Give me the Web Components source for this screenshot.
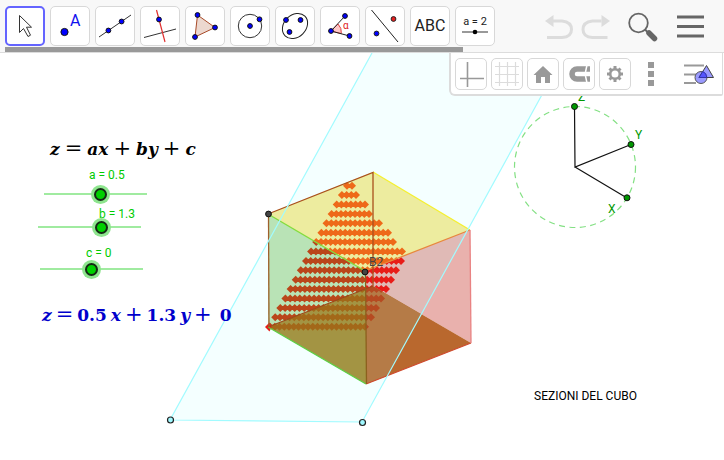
<!DOCTYPE html>
<html lang="it">
<head>
<meta charset="utf-8">
<title>Sezioni del cubo</title>
<style>
  html, body { margin: 0; min-height: 100%; background: #fff; }
  body { font-family: Roboto, "Liberation Sans", sans-serif; font-size: 12px; color: #000; }
</style>
</head>
<body>
<geo-app></geo-app>

<template id="geo-app">
  <style>
    :host { display: flex; flex-direction: column; min-height: 100vh; overflow: hidden; }
    tool-header { flex: none; }
    graph-view { flex: 1; }
  </style>
  <tool-header></tool-header>
  <graph-view></graph-view>
</template>

<template id="tool-button">
  <style>
    :host { display: block; flex: none; width: 40px; height: 40px; }
    button { box-sizing: border-box; display: grid; place-items: center; width: 100%; height: 100%; padding: 0; margin: 0;
      background: #fff; border: 1px solid #d8d8d8; border-radius: 5px; color: #222; font: 16px/20px Roboto, sans-serif; cursor: pointer; }
    :host([selected]) button { border: 2px solid #6464ff; }
    :host([small]) { width: 32px; height: 32px; }
    :host([plain]) button { background: none; border: 0; }
  </style>
  <button type="button"><slot></slot></button>
</template>

<template id="tool-header">
  <style>
    :host { display: grid; grid-template-columns: minmax(0, 1fr) auto; height: 52px; background: #f8f8f8; border-bottom: 1px solid #dcdcdc; }
    .tools { padding: 6px 0 0 5px; }
    nav { display: flex; gap: 5px; }
    .bar { width: 458px; height: 5px; margin-top: 1px; background: #999; }
    .actions { display: flex; align-items: flex-start; padding: 7px 14px 0 0; }
    .actions tool-button { height: 40px; width: 40px; }
    .actions .step { width: 36px; }
    .actions .find { width: 48px; margin: 0 3px 0 6px; }
    svg { display: block; }
    .slide { display: grid; justify-items: center; font-size: 11px; line-height: 12px; }
  </style>
  <div class="tools">
    <nav aria-label="Strumenti">
      <tool-button selected label="Muovi"><svg width="36" height="36" viewBox="7 8 36 36"><path d="M19.500 15.500v17l4-4 4.500 8 2.500-1.300-4-8h5z" fill="#fff" stroke="#333"/></svg></tool-button>
      <tool-button label="Punto"><svg width="38" height="38" viewBox="51 7 38 38"><circle cx="64.500" cy="32" r="3.600" fill="#00f" stroke="#111"/><text x="70" y="26" font-family="Roboto" font-size="16" fill="#11e">A</text></svg></tool-button>
      <tool-button label="Retta"><svg width="38" height="38" viewBox="96 7 38 38"><path d="M99 37 131 15" stroke="#333"/><g fill="#00f" stroke="#111"><circle cx="108.400" cy="30.500" r="2.400"/><circle cx="121.600" cy="21.500" r="2.400"/></g></svg></tool-button>
      <tool-button label="Retta perpendicolare"><svg width="38" height="38" viewBox="141 7 38 38"><path d="M144 37.500 176 29" stroke="#333"/><path d="m156.500 10 8.500 32" stroke="#e03030" stroke-width="1.200"/><circle cx="159" cy="19.500" r="2.400" fill="#00f" stroke="#111"/></svg></tool-button>
      <tool-button label="Poligono"><svg width="38" height="38" viewBox="186 7 38 38"><path d="m197.500 15 17.500 12.500-20 9.500z" fill="#ecd8cf" stroke="#a84a28"/><g fill="#00f" stroke="#111"><circle cx="197.500" cy="15" r="2.400"/><circle cx="215" cy="27.500" r="2.400"/><circle cx="195" cy="37" r="2.400"/></g></svg></tool-button>
      <tool-button label="Circonferenza"><svg width="38" height="38" viewBox="231 7 38 38"><circle cx="250" cy="26" r="11.700" fill="none" stroke="#333"/><g fill="#00f" stroke="#111"><circle cx="250" cy="26" r="2.400"/><circle cx="259.500" cy="19.300" r="2.400"/></g></svg></tool-button>
      <tool-button label="Ellisse"><svg width="38" height="38" viewBox="276 7 38 38"><ellipse cx="295" cy="26" rx="14" ry="11" transform="rotate(-45 295 26)" fill="none" stroke="#222"/><g fill="#00f" stroke="#111"><circle cx="286" cy="20" r="2.400"/><circle cx="300.500" cy="20" r="2.400"/><circle cx="289.500" cy="32" r="2.400"/></g></svg></tool-button>
      <tool-button label="Angolo"><svg width="38" height="38" viewBox="321 7 38 38"><path d="m331 31 7-7q4 4 3.300 9.600z" fill="#ffc8c8" stroke="#e04040"/><path d="m345 16-14 15 18.500 5" fill="none" stroke="#222"/><text x="343" y="29" font-family="Roboto" font-size="10" fill="#e02020">α</text><g fill="#00f" stroke="#111"><circle cx="345" cy="16" r="2.400"/><circle cx="331" cy="31" r="2.400"/><circle cx="349.500" cy="36" r="2.400"/></g></svg></tool-button>
      <tool-button label="Simmetria assiale"><svg width="38" height="38" viewBox="366 7 38 38"><path d="m371.500 10 26.500 32" stroke="#222"/><g stroke="#222"><circle cx="393.500" cy="19" r="2.400" fill="#e82020"/><circle cx="376.500" cy="33.500" r="2.400" fill="#00f"/></g></svg></tool-button>
      <tool-button label="Testo">ABC</tool-button>
      <tool-button label="Slider"><span class="slide">a = 2<svg width="26" height="8"><path d="M0 4h26" stroke="#555" stroke-width="1.200"/><circle cx="13" cy="4" r="2.300"/></svg></span></tool-button>
    </nav>
    <div class="bar"></div>
  </div>
  <div class="actions">
    <tool-button plain class="step" label="Annulla"><svg width="36" height="40" viewBox="541 7 36 40"><path d="M547 37.500h15q9.500-.5 9.500-8t-9.500-8.500h-9" fill="none" stroke="#dcdcdc" stroke-width="3"/><path d="m545 21 8.500-6v12z" fill="#dcdcdc"/></svg></tool-button>
    <tool-button plain class="step" label="Ripeti"><svg width="36" height="40" viewBox="577 7 36 40"><path d="M607.500 37.500h-15q-9.500-.5-9.500-8t9.500-8.500h9" fill="none" stroke="#dcdcdc" stroke-width="3"/><path d="m610 21-8.500-6v12z" fill="#dcdcdc"/></svg></tool-button>
    <tool-button plain class="find" label="Cerca"><svg width="40" height="40" viewBox="623 7 40 40"><circle cx="638.500" cy="23" r="9.300" fill="none" stroke="#666" stroke-width="1.800"/><path d="m645 29.500 4 4" stroke="#666" stroke-width="2"/><path d="m649 33 5.500 5.500" stroke="#666" stroke-width="5.500" stroke-linecap="round"/></svg></tool-button>
    <tool-button plain label="Menu"><svg width="28" height="24"><path d="M1 2h27M1 11.500h27M1 21h27" stroke="#666" stroke-width="3"/></svg></tool-button>
  </div>
</template>

<template id="style-bar">
  <style>
    :host { box-sizing: border-box; display: flex; align-items: center; gap: 4px; padding: 5px 4px 4px 4px; background: #fff;
      border: solid #dcdcdc; border-width: 0 1px 2px 2px; border-radius: 0 0 2px 6px; }
    svg { display: block; }
    .more { width: 32px; }
    .style { width: 42px; margin-left: 5px; }
    .style svg { margin-left: 4px; }
  </style>
  <tool-button small label="Assi"><svg width="30" height="30"><path d="M4 19.500h24M11.500 3v25" stroke="#999" stroke-width="1.600"/></svg></tool-button>
  <tool-button small label="Griglia"><svg width="30" height="30"><path d="M3 7.500h24M3 15.500h24M3 23.500h24M7.500 3v24M15.500 3v24M23.500 3v24" stroke="#dcdcdc" stroke-width="1.200"/></svg></tool-button>
  <tool-button small label="Vista predefinita"><svg width="30" height="30" fill="#999"><path d="m15 7 9.500 9H22v8h-5v-6h-4v6H8v-8H5.500z"/></svg></tool-button>
  <tool-button small label="Cattura punti"><svg width="30" height="30"><path d="M26 10H13a5 5 0 0 0 0 10h13" fill="none" stroke="#999" stroke-width="5.500"/><path d="m23 6-1.500 7m0 4 1.500 7" stroke="#fff" stroke-width="1.500"/></svg></tool-button>
  <tool-button small label="Impostazioni"><svg width="30" height="30"><circle cx="15" cy="15" r="4.800" fill="none" stroke="#999" stroke-width="2.600"/><path d="M15 7v3m0 10v3M7 15h3m10 0h3M9.500 9.500l2 2m7 7 2 2m-11 0 2-2m7-7 2-2" stroke="#999" stroke-width="3"/></svg></tool-button>
  <tool-button small plain class="more" label="Altro"><svg width="6" height="24" fill="#999"><path d="M0 0h6v6H0zM0 9h6v6H0zM0 18h6v6H0z"/></svg></tool-button>
  <tool-button small plain class="style" label="Stile"><svg width="32" height="24" viewBox="684 62 32 24"><path d="M685 65.500h20M685 74.500h12M685 83h12" stroke="#999" stroke-width="2.200"/><circle cx="702" cy="77.500" r="6" fill="#9a9aff" stroke="#555"/><path d="m707.500 65.500 7 12H700z" fill="#8080ff" fill-opacity=".8" stroke="#444"/><path d="M707.800 77.500H700l3.700-6q4 1.500 4.100 6z" fill="#55f" stroke="#33a"/></svg></tool-button>
</template>

<template id="value-slider">
  <style>
    :host { position: absolute; display: block; width: 103px; color: #00cc00; font-size: 12px; line-height: 14px; }
    label { position: absolute; white-space: nowrap; left: var(--label-x); top: var(--label-y); }
    input { appearance: none; display: block; width: 100%; height: 18px; margin: 0; background: linear-gradient(#a0eba0, #a0eba0) center / 100% 2px no-repeat; }
    input::-webkit-slider-thumb { appearance: none; box-sizing: border-box; width: 13px; height: 13px; border: 2px solid #142814; border-radius: 50%; background: #00d000; box-shadow: 0 0 0 3px #8ee58e; }
  </style>
  <label for="v"></label>
  <input id="v" type="range" min="-5" max="5" step="0.1">
</template>

<template id="math-line">
  <style>
    :host { position: absolute; display: flex; align-items: baseline; white-space: nowrap; font: bold 17px/20px "DejaVu Serif", serif; }
  </style>
  <slot></slot>
</template>

<template id="graph-view">
  <style>
    :host { position: relative; display: block; overflow: hidden; min-height: 407px; background: #fff; }
    .scene { position: absolute; inset: 0; width: 100%; height: 100%; }
    style-bar { position: absolute; top: 0; right: 1px; }
    .caption { position: absolute; left: 534px; top: 336px; line-height: 14px; white-space: nowrap; }
    math-line i, math-line b { flex: none; }
    .op { font-weight: normal; font-size: 21px; padding: 0 5px; }
    .blue { color: #0000cc; }
    .blue .op { padding: 0 4px; }
    .sp { padding-left: 4px; }
  </style>
  <svg class="scene" role="img" aria-label="Cubo sezionato da un piano">
    <defs>
      <clipPath id="cTop"><path d="M268 214 373 172 470 230 365 271z"/></clipPath>
      <clipPath id="cGreen"><path d="M260 214 268 214 365 271 366 289 268 327 260 327z"/></clipPath>
      <clipPath id="cRed"><path d="M365 271 470 230V343L373 286 366 289z"/></clipPath>
      <clipPath id="cOlive"><path d="M268 327 366 289V384z"/></clipPath>
      <clipPath id="cBrown"><path d="M366 289 373 286 471 343 366 384z"/></clipPath>
      <clipPath id="cPlane"><path d="M170 420 372 53H565L362 422z"/></clipPath>
      <path id="rows"/>
    </defs>
    <g transform="translate(0 -53)">
      <path d="M170 420 372 53H565L362 422z" fill="#f4ffff"/>
      <path d="M268 214 373 172 470 230 365 271z" fill="#edec9f"/>
      <path d="M268 214 365 271 366 289 268 327z" fill="#b9e3b6"/>
      <path d="M365 271 470 230 471 343 373 286 366 289z" fill="#e9b1ad"/>
      <path d="M268 327 366 289V384z" fill="#a39443"/>
      <path d="M366 289 373 286 471 343 366 384z" fill="#b9682e"/>
      <g clip-path="url(#cPlane)">
        <path d="M365 271 470 230 471 343 373 286 366 289z" fill="#e0bab6"/>
        <path d="M366 289 373 286 471 343 366 384z" fill="#b57b47"/>
      </g>
      <use href="#rows" fill="#ee6919" clip-path="url(#cTop)"/>
      <use href="#rows" fill="#ba461a" clip-path="url(#cGreen)"/>
      <use href="#rows" fill="#e81c18" clip-path="url(#cRed)"/>
      <use href="#rows" fill="#a36819" clip-path="url(#cOlive)"/>
      <use href="#rows" fill="#b64a21" clip-path="url(#cBrown)"/>
      <path d="m265 327 4.500-4.500 2 4.500-2 4.500z" fill="#e81c18"/>
      <g fill="none" stroke-width="1.300">
        <path d="M373 172 470 230" stroke="#f5f030"/>
        <path d="M365 271 470 230" stroke="#e8883c"/>
        <path d="M268 214 365 271" stroke="#84dc3c"/>
        <path d="M268 327 366 384" stroke="#5cd044"/>
        <path d="M366 384 471 343" stroke="#cf4a2e"/>
        <path d="M470 230 471 343" stroke="#e98282"/>
        <path d="M268 214 373 172.500V286" stroke="#a9501c"/>
        <path d="M268 327 373 286" stroke="#9c4818"/>
        <path d="M268.500 214 269 327" stroke="#a0602c"/>
        <path d="M365.500 271 366.500 384" stroke="#8c601e"/>
        <path d="M372 53 170 420 362 422 565 53" stroke="#a2fbff" stroke-width="1.200"/>
      </g>
      <g fill="#444" stroke="#111"><circle cx="268.500" cy="214" r="2.900"/><circle cx="365" cy="272" r="2.900"/></g>
      <g fill="#a0f8ff" stroke="#222" stroke-width="1.200"><circle cx="170.500" cy="420" r="3"/><circle cx="362.500" cy="422.500" r="3"/></g>
      <text x="369" y="266" font-size="12" fill="#444">B2</text>
      <circle cx="575" cy="167" r="60.500" fill="none" stroke="#84e084" stroke-width="1.200" stroke-dasharray="6 4.500"/>
      <path d="M574.500 107 575 167 631 144.500M575 167 627 198" fill="none" stroke="#111" stroke-width="1.200"/>
      <g fill="#009800" stroke="#111"><circle cx="574.500" cy="106.500" r="3"/><circle cx="631" cy="144.500" r="3"/><circle cx="627" cy="197.800" r="3"/></g>
      <g font-size="12" fill="#009800"><text x="578" y="101">Z</text><text x="635" y="139">Y</text><text x="608" y="213">X</text></g>
    </g>
  </svg>
  <math-line style="left:50px;top:85px"><i>z</i><span class="op">=</span><i>ax</i><span class="op">+</span><i>by</i><span class="op">+</span><i>c</i></math-line>
  <value-slider name="a" value="0.5" style="left:44px;top:132px;--label-x:45px;--label-y:-17px"></value-slider>
  <value-slider name="b" value="1.3" style="left:38px;top:165px;--label-x:61px;--label-y:-11px"></value-slider>
  <value-slider name="c" value="0" style="left:40px;top:207px;--label-x:46px;--label-y:-14px"></value-slider>
  <math-line class="blue" style="left:42px;top:251px"><i>z</i><span class="op">=</span><b>0.5</b><i class="sp">x</i><span class="op">+</span><b>1.3</b><i class="sp">y</i><span class="op">+</span><b class="sp">0</b></math-line>
  <div class="caption">SEZIONI DEL CUBO</div>
  <style-bar></style-bar>
</template>

<script>
  class Base extends HTMLElement {
    constructor() {
      super();
      this.attachShadow({ mode: 'open' })
        .append(document.getElementById(this.localName).content.cloneNode(true));
    }
  }

  customElements.define('tool-button', class extends Base {
    connectedCallback() {
      this.shadowRoot.querySelector('button').setAttribute('aria-label', this.getAttribute('label') || '');
    }
  });

  customElements.define('value-slider', class extends Base {
    connectedCallback() {
      const input = this.shadowRoot.querySelector('input');
      const label = this.shadowRoot.querySelector('label');
      const show = () => { label.textContent = this.getAttribute('name') + ' = ' + input.value; };
      input.value = this.getAttribute('value');
      input.addEventListener('input', show);
      show();
    }
  });

  customElements.define('math-line', class extends Base {});
  customElements.define('style-bar', class extends Base {});
  customElements.define('tool-header', class extends Base {});

  customElements.define('graph-view', class extends Base {
    connectedCallback() {
      // Lattice of diamonds that fills the section polygon, one row per line.
      const ends = [356, 360, 369, 373, 383, 392, 397, 406, 405, 400, 395, 390, 385, 380, 375, 369];
      let d = '';
      ends.forEach((end, row) => {
        const y = 185.7 + 9.4 * row;
        const first = 347 - 5.13 * row;
        const count = Math.round((end - 4 - first) / 4.8);
        const step = (end - 4 - first) / count;
        for (let k = 0; k <= count; k++) {
          d += `M${(first + k * step - 4).toFixed(1)} ${y.toFixed(1)}l4-4 4 4-4 4z`;
        }
      });
      this.shadowRoot.getElementById('rows').setAttribute('d', d);
    }
  });

  customElements.define('geo-app', class extends Base {});
</script>
</body>
</html>
